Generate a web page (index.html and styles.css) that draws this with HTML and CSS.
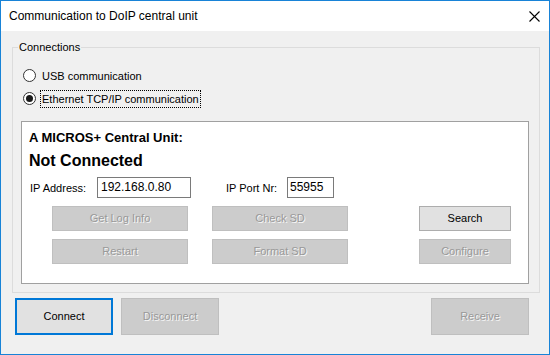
FILE: index.html
```html
<!DOCTYPE html>
<html>

<head>
    <title>Communication to DoIP central unit</title>
    <link rel="stylesheet" href="styles.css">
</head>

<body>
    <div class="window">
        <div class="titlebar">
            <span class="title">Communication to DoIP central unit</span>
            <svg class="close" width="11" height="11" viewBox="0 0 11 11">
                <path d="M0.5 0.5 L10.5 10.5 M10.5 0.5 L0.5 10.5" stroke="#000" stroke-width="1.1" fill="none"/>
            </svg>
        </div>
        <div class="client">
            <fieldset class="group">
                <legend>Connections</legend>
                <div class="radio-row">
                    <span class="radio"></span>
                    <span class="radio-label">USB communication</span>
                </div>
                <div class="radio-row">
                    <span class="radio checked"></span>
                    <span class="radio-label focused">Ethernet TCP/IP communication</span>
                </div>

                <div class="panel">
                    <div class="unit-title">A MICROS+ Central Unit:</div>
                    <div class="unit-status">Not Connected</div>
                    <div class="ip-row">
                        <label class="ip-label">IP Address:</label>
                        <span class="textbox ip-address">192.168.0.80</span>
                        <label class="port-label">IP Port Nr:</label>
                        <span class="textbox ip-port">55955</span>
                    </div>
                    <div class="button-grid">
                        <button class="btn disabled">Get Log Info</button>
                        <button class="btn disabled">Check SD</button>
                        <button class="btn side">Search</button>
                        <button class="btn disabled">Restart</button>
                        <button class="btn disabled">Format SD</button>
                        <button class="btn side disabled">Configure</button>
                    </div>
                </div>
            </fieldset>

            <div class="actions">
                <button class="btn big default">Connect</button>
                <button class="btn big disabled">Disconnect</button>
                <button class="btn big disabled receive">Receive</button>
            </div>
        </div>
    </div>
</body>

</html>
```

FILE: styles.css
```css
body {
    margin: 0;
    font-family: "Liberation Sans", Arial, sans-serif;
    font-size: 11px;
    color: #000;
}

.window {
    width: 550px;
    height: 355px;
    box-sizing: border-box;
    border: 1px solid #1883d7;
    display: flex;
    flex-direction: column;
    background-color: #f0f0f0;
}

.titlebar {
    height: 30px;
    background-color: #fff;
    display: flex;
    align-items: center;
    justify-content: space-between;
    padding-left: 8px;
    padding-right: 9px;
}

.title {
    font-size: 12px;
    padding-bottom: 1px;
}

.close {
    display: block;
}

.client {
    flex: 1;
    padding: 9px 9px 0 11px;
}

.group {
    margin: 0;
    border: 1px solid #dcdcdc;
    padding: 10px 10px 8px 8px;
    min-width: 0;
}

.group legend {
    padding: 0 1px;
    margin-left: -3px;
    line-height: 14px;
}

.radio-row {
    height: 23px;
    display: flex;
    align-items: center;
    padding-left: 2px;
}

.radio {
    width: 13px;
    height: 13px;
    box-sizing: border-box;
    border: 1px solid #333;
    border-radius: 50%;
    background-color: #fff;
    margin-right: 4px;
    display: flex;
    align-items: center;
    justify-content: center;
}

.radio.checked::after {
    content: "";
    width: 7px;
    height: 7px;
    border-radius: 50%;
    background-color: #1a1a1a;
}

.radio-label {
    border: 1px dotted transparent;
    padding: 1px 1px;
    line-height: 14px;
}

.radio-label.focused {
    border-color: #000;
}

.panel {
    margin-top: 11px;
    height: 163px;
    box-sizing: border-box;
    border: 1px solid #a0a0a0;
    background-color: #fff;
    padding: 8px 0 0 7px;
}

.unit-title {
    font-size: 13px;
    font-weight: bold;
    line-height: 16px;
}

.unit-status {
    font-size: 16px;
    font-weight: bold;
    line-height: 20px;
    margin-top: 5px;
}

.ip-row {
    display: flex;
    align-items: center;
    margin-top: 6px;
    height: 21px;
}

.ip-label {
    width: 67px;
    padding-left: 1px;
}

.port-label {
    width: 61px;
    margin-left: 35px;
}

.textbox {
    height: 21px;
    box-sizing: border-box;
    border: 1px solid #7a7a7a;
    padding: 0 3px;
    line-height: 19px;
    font-size: 12px;
}

.ip-address {
    width: 94px;
}

.ip-port {
    width: 47px;
    padding-left: 2px;
}

.button-grid {
    display: grid;
    grid-template-columns: 136px 136px 139px;
    grid-auto-rows: 25px;
    column-gap: 24px;
    row-gap: 8px;
    margin-top: 8px;
    margin-left: 23px;
}

.btn {
    font-family: "Liberation Sans", Arial, sans-serif;
    font-size: 11px;
    color: #000;
    background-color: #e1e1e1;
    border: 1px solid #adadad;
    margin: 0;
    padding: 0 0 1px;
    box-sizing: border-box;
}

.btn.side {
    width: 92px;
    justify-self: end;
}

.btn.disabled {
    background-color: #cccccc;
    border-color: #bfbfbf;
    color: #999999;
    text-shadow: 1px 1px 0 #f6f6f6;
}

.actions {
    display: flex;
    gap: 8px;
    margin-top: 5px;
    padding-left: 3px;
    padding-right: 11px;
}

.btn.big {
    width: 98px;
    height: 37px;
}

.btn.default {
    border: 2px solid #0078d7;
}

.btn.receive {
    margin-left: auto;
}
```
